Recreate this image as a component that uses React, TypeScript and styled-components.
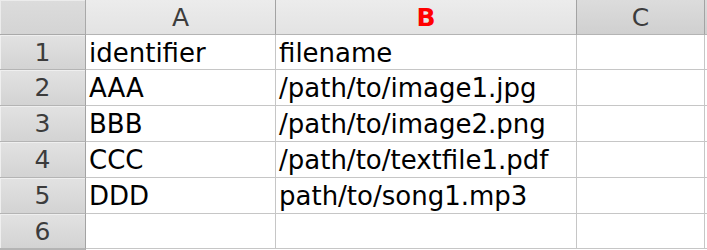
import { Fragment } from 'react'
import styled, { createGlobalStyle, css } from 'styled-components'

const GlobalStyle = createGlobalStyle`
  html, body {
    margin: 0;
    padding: 0;
    background: #fff;
    overflow: hidden;
  }
  body {
    font-family: 'DejaVu Sans', 'Liberation Sans', sans-serif;
  }
`

const columns = ['A', 'B', 'C']
const selectedColumn = 'B'

const rows: string[][] = [
  ['identifier', 'filename', ''],
  ['AAA', '/path/to/image1.jpg', ''],
  ['BBB', '/path/to/image2.png', ''],
  ['CCC', '/path/to/textfile1.pdf', ''],
  ['DDD', 'path/to/song1.mp3', ''],
  ['', '', ''],
]

// row heights incl. the bottom grid line, taken from the screenshot
const rowHeights = [35, 36, 36, 36, 36, 35]

const Sheet = styled.div`
  display: grid;
  grid-template-columns: 86px 190px 301px 128px 1fr;
  grid-template-rows: 35px ${rowHeights.map((h) => `${h}px`).join(' ')} 1fr;
  width: 707px;
  height: 250px;
  overflow: hidden;
`

const Corner = styled.div`
  box-sizing: border-box;
  background: linear-gradient(#dcdcdc, #d4d4d4);
  border-right: 1px solid #a9a9a9;
  border-bottom: 1px solid #a9a9a9;
  box-shadow: inset 1px 1px 0 #ececec;
`

const ColHeader = styled.div<{ $active?: boolean; $selected?: boolean }>`
  box-sizing: border-box;
  display: flex;
  align-items: center;
  justify-content: center;
  font-size: 25px;
  color: #3c3c3c;
  border-right: 1px solid #a3a3a3;
  border-bottom: 1px solid #b4b4b4;
  background: linear-gradient(#dcdcdc, #d0d0d0);
  ${(p) =>
    p.$active &&
    css`
      background: linear-gradient(#ececec, #e3e3e3);
    `}
  ${(p) =>
    p.$selected &&
    css`
      color: #ff0000;
      font-weight: bold;
    `}
`

const RowHeader = styled.div`
  box-sizing: border-box;
  display: flex;
  align-items: center;
  justify-content: center;
  font-size: 25px;
  color: #3c3c3c;
  background: linear-gradient(#e2e2e2, #d3d3d3);
  border-right: 1px solid #a3a3a3;
  border-bottom: 1px solid #b4b4b4;
  box-shadow: inset 1px 1px 0 #efefef;
`

const Cell = styled.div`
  box-sizing: border-box;
  display: flex;
  align-items: center;
  padding: 1px 0 0 3px;
  font-size: 26px;
  color: #000;
  white-space: nowrap;
  overflow: hidden;
  border-right: 1px solid #c6c6c6;
  border-bottom: 1px solid #c6c6c6;
`

const App = () => {
  return (
    <>
      <GlobalStyle />
      <Sheet>
        <Corner />
        {columns.map((c) => (
          <ColHeader key={c} $active={c !== 'C'} $selected={c === selectedColumn}>
            {c}
          </ColHeader>
        ))}
        <ColHeader />
        {rows.map((r, i) => (
          <Fragment key={i}>
            <RowHeader>{i + 1}</RowHeader>
            {r.map((v, j) => (
              <Cell key={j}>{v}</Cell>
            ))}
            <Cell />
          </Fragment>
        ))}
        <RowHeader />
      </Sheet>
    </>
  )
}

export default App
